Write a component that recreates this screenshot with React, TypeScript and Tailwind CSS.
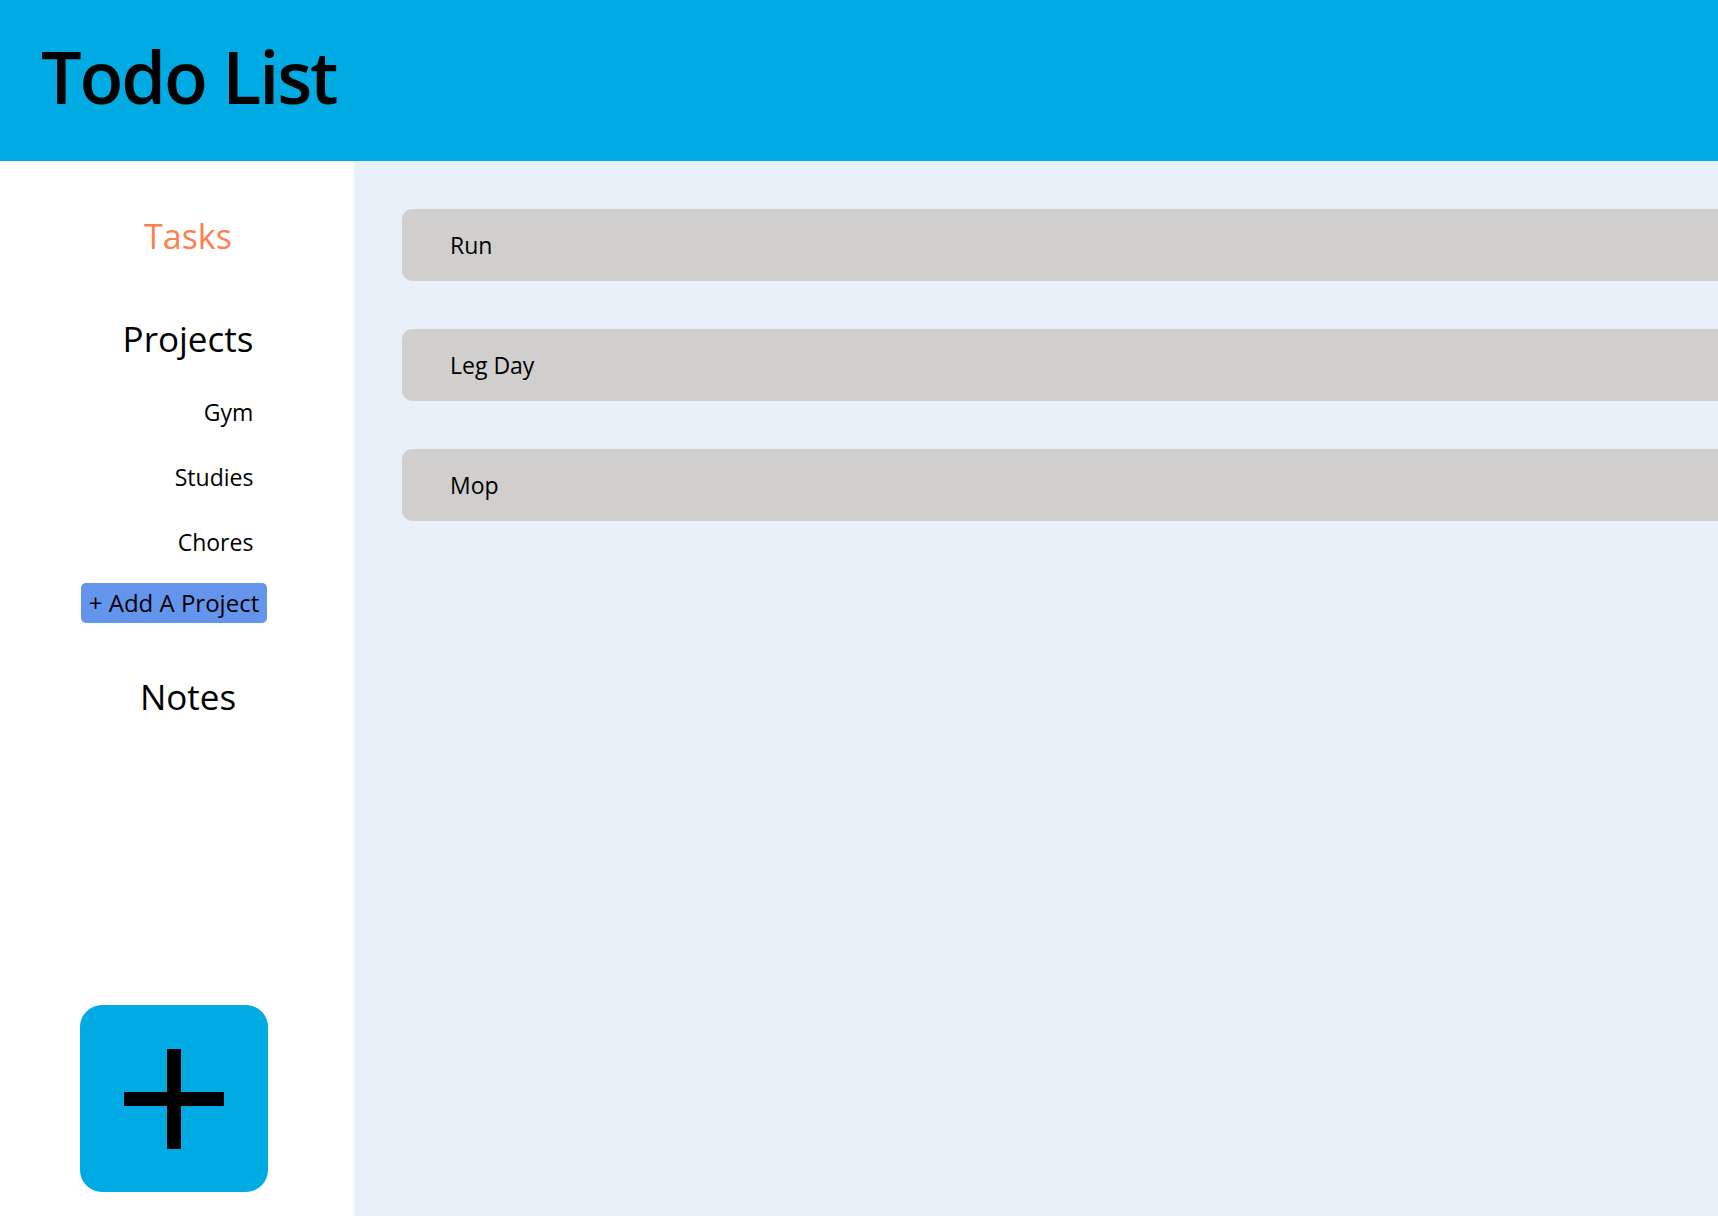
const tasks = ['Run', 'Leg Day', 'Mop']
const projects = ['Gym', 'Studies', 'Chores']

export default function App() {
  return (
    <div className="flex h-[1216px] w-[1718px] flex-col overflow-hidden font-['Open_Sans',sans-serif] text-black">
      <header className="flex h-[161px] shrink-0 items-start bg-[#00abe3] pl-[41px] pt-[40px]">
        <h1 className="text-[72px] font-semibold leading-none tracking-[-0.03em]">Todo List</h1>
      </header>

      <div className="flex min-h-0 flex-1">
        <aside className="flex w-[354px] shrink-0 flex-col items-center bg-white pb-[24px] pl-[22px] pt-[58px]">
          <div className="text-[34px] leading-none text-[#ff7f50]">Tasks</div>

          <div className="mt-[68px] flex flex-col items-end">
            <div className="text-[35px] leading-none">Projects</div>
            <ul className="mt-[45px] flex flex-col items-end gap-[42px] text-[23px] leading-none">
              {projects.map((p) => (
                <li key={p}>{p}</li>
              ))}
            </ul>
          </div>

          <button className="mr-[28px] mt-[29px] h-[40px] rounded-[5px] bg-[#6495ed] px-[8px] text-[24px] leading-none">
            + Add A Project
          </button>

          <div className="mt-[56px] text-[35px] leading-none">Notes</div>

          <button className="mr-[28px] mt-auto flex h-[187px] w-[188px] items-center justify-center rounded-[22px] bg-[#00abe3]">
            <svg width="100" height="100" viewBox="0 0 100 100">
              <rect x="43" y="0" width="14" height="100" fill="#000" />
              <rect x="0" y="43" width="100" height="14" fill="#000" />
            </svg>
          </button>
        </aside>

        <main className="flex flex-1 flex-col gap-[48px] bg-[#e8f0fa] pl-[48px] pt-[48px]">
          {tasks.map((t) => (
            <div
              key={t}
              className="flex h-[72px] items-center rounded-l-[10px] bg-[#d0cfcd] pl-[48px] text-[23px]"
            >
              {t}
            </div>
          ))}
        </main>
      </div>
    </div>
  )
}
